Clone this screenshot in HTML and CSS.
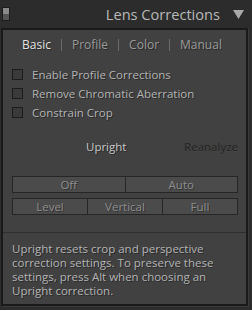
FILE: index.html
```html
<!DOCTYPE html>
<html lang="en">
<head>
    <meta charset="UTF-8">
    <title>Lens Corrections</title>
    <link rel="stylesheet" href="styles.css">
</head>
<body>
    <header class="panel-header">
        <div class="switch"><span></span></div>
        <div class="title">Lens Corrections</div>
        <svg class="arrow" width="11" height="9" viewBox="0 0 11 9"><polygon points="0,0 11,0 5.5,9" fill="#a8a8a8"/></svg>
    </header>
    <main class="panel">
        <nav class="tabs">
            <span class="tab active">Basic</span>
            <span class="sep"></span>
            <span class="tab">Profile</span>
            <span class="sep"></span>
            <span class="tab">Color</span>
            <span class="sep"></span>
            <span class="tab">Manual</span>
        </nav>
        <ul class="checks">
            <li><span class="box"></span>Enable Profile Corrections</li>
            <li><span class="box"></span>Remove Chromatic Aberration</li>
            <li><span class="box"></span>Constrain Crop</li>
        </ul>
        <div class="upright-row">
            <span class="upright">Upright</span>
            <span class="reanalyze">Reanalyze</span>
        </div>
        <div class="btn-row two">
            <button>Off</button>
            <button>Auto</button>
        </div>
        <div class="btn-row three">
            <button>Level</button>
            <button>Vertical</button>
            <button>Full</button>
        </div>
        <p class="note">Upright resets crop and perspective correction settings. To preserve these settings, press Alt when choosing an Upright correction.</p>
    </main>
</body>
</html>
```

FILE: styles.css
```css
body {
    margin: 0;
    width: 252px;
    height: 310px;
    background-color: #2c2c2c;
    font-family: 'Open Sans', sans-serif;
    color: #b4b4b4;
    overflow: hidden;
}
.panel-header {
    height: 28px;
    display: flex;
    align-items: center;
    padding: 0 8px 0 2px;
    box-sizing: border-box;
}
.switch {
    width: 8px;
    height: 14px;
    border: 1px solid #1c1c1c;
    background-color: #555;
    box-sizing: border-box;
}
.switch span {
    display: block;
    height: 6px;
    background-color: #8a8a8a;
}
.title {
    margin-left: auto;
    font-size: 14.6px;
    color: #b8b8b8;
    margin-right: 13px;
}
.arrow {
    display: block;
}
.panel {
    margin: 0 4px 0 1px;
    height: 278px;
    box-sizing: border-box;
    border: 2px solid #1a1a1a;
    background-color: #414141;
    box-shadow: 1px 1px 0 #3a3a3a;
}
.tabs {
    display: flex;
    align-items: center;
    height: 29px;
    padding-left: 19px;
    font-size: 12px;
}
.tab {
    color: #9a9a9a;
    text-shadow: 1px 1px 0 #2a2a2a;
}
.tab.active {
    color: #e2e2e2;
}
.sep {
    width: 1px;
    height: 12px;
    background-color: #6a6a6a;
    margin: 0 10px;
}
.checks {
    list-style: none;
    margin: 6px 0 0;
    padding: 0 0 0 9px;
    font-size: 11.5px;
}
.checks li {
    display: flex;
    align-items: center;
    height: 19px;
    text-shadow: 1px 1px 0 #2a2a2a;
}
.box {
    width: 9px;
    height: 9px;
    border: 1px solid #1c1c1c;
    background-color: #3a3a3a;
    margin-right: 9px;
}
.upright-row {
    display: flex;
    align-items: center;
    height: 20px;
    margin-top: 14px;
    font-size: 11.5px;
}
.upright {
    margin-left: 83px;
    color: #c8c8c8;
    text-shadow: 1px 1px 0 #2a2a2a;
}
.reanalyze {
    margin-left: auto;
    margin-right: 8px;
    color: #232323;
    text-shadow: 0 1px 0 #474747;
}
.btn-row {
    display: flex;
    margin: 0 8px 0 9px;
}
.btn-row.two {
    margin-top: 20px;
}
.btn-row.three {
    margin-top: 5px;
}
.btn-row button {
    flex: 1;
    height: 17px;
    padding: 0;
    border: 1px solid #262626;
    background-color: #4b4b4b;
    color: #8e8e8e;
    font-family: 'Open Sans', sans-serif;
    font-size: 11.5px;
    line-height: 15px;
    text-shadow: 1px 1px 0 #333;
}
.btn-row button + button {
    border-left: none;
}
.note {
    margin: 17px 0 0;
    padding: 9px 8px 0 9px;
    border-top: 1px solid #2e2e2e;
    font-size: 11.5px;
    line-height: 14px;
    text-shadow: 1px 1px 0 #2a2a2a;
}
```
